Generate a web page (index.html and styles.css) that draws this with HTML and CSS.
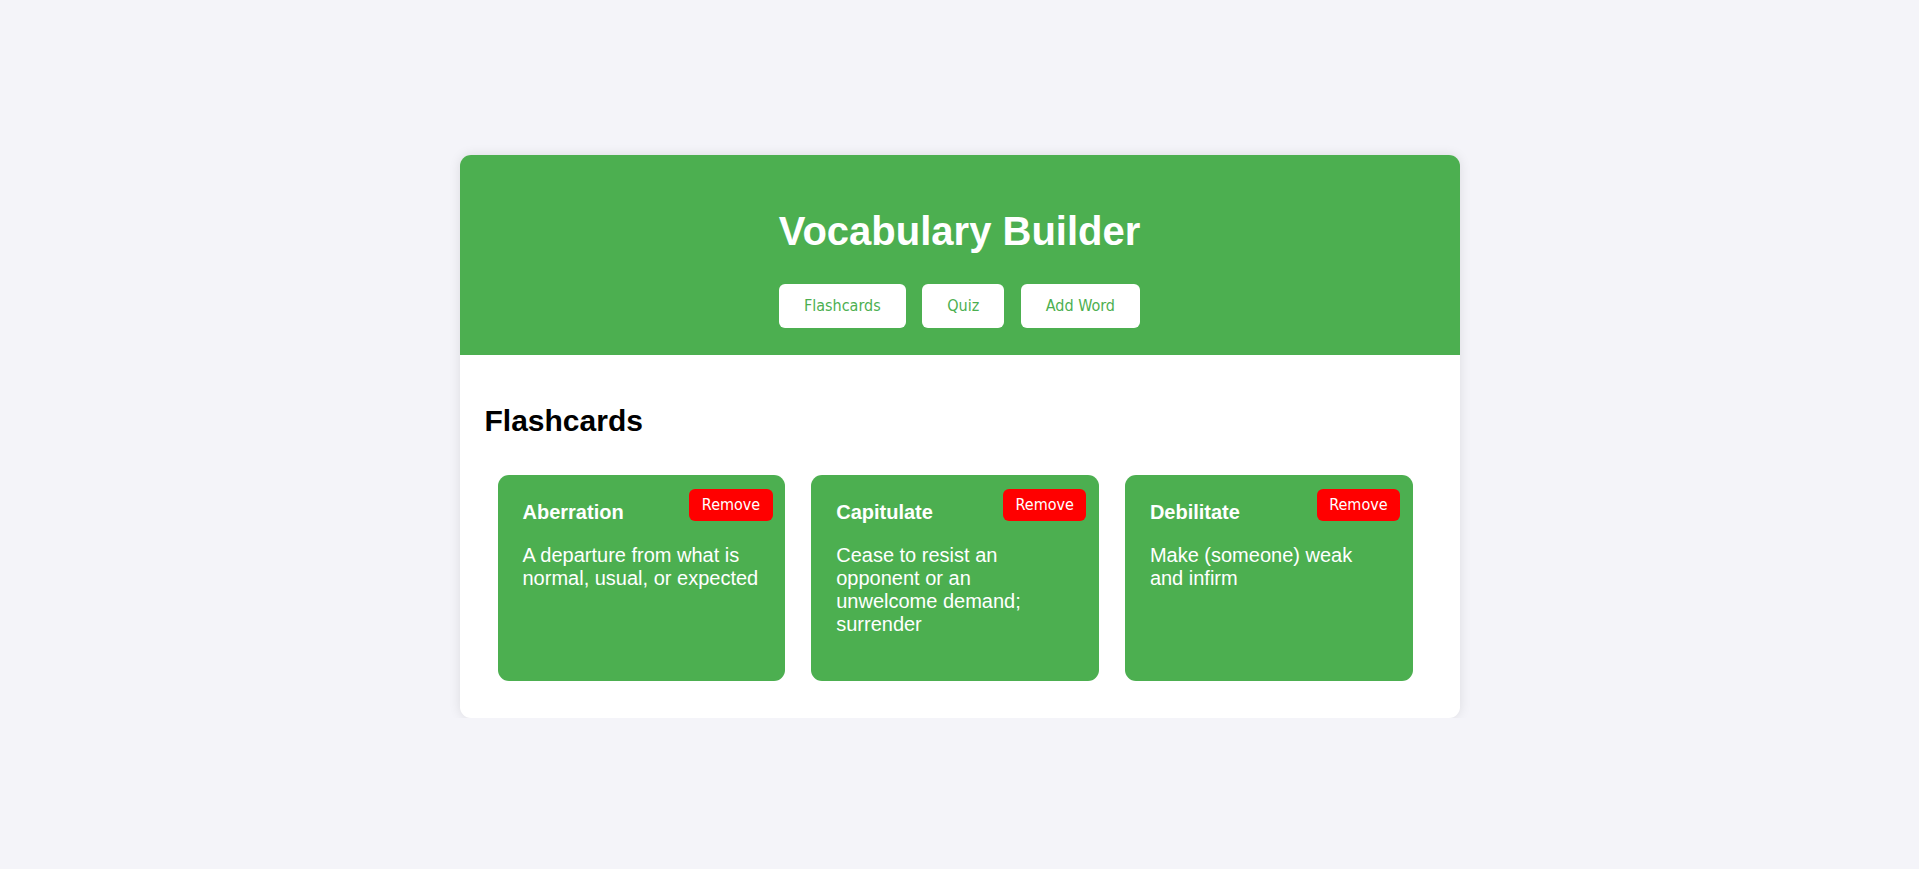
FILE: index.html
```html
<!DOCTYPE html>
<html lang="en">
<head>
<meta charset="utf-8">
<title>Vocabulary Builder</title>
<link rel="stylesheet" href="styles.css">
</head>
<body>
<div class="container">
  <header class="header">
    <h1 class="title">Vocabulary Builder</h1>
    <nav class="nav">
      <button class="nav-btn">Flashcards</button>
      <button class="nav-btn">Quiz</button>
      <button class="nav-btn">Add Word</button>
    </nav>
  </header>
  <section class="content">
    <h2 class="section-title">Flashcards</h2>
    <div class="cards">
      <div class="card">
        <button class="remove-btn">Remove</button>
        <div class="word">Aberration</div>
        <p class="definition">A departure from what is normal, usual, or expected</p>
      </div>
      <div class="card">
        <button class="remove-btn">Remove</button>
        <div class="word">Capitulate</div>
        <p class="definition">Cease to resist an opponent or an unwelcome demand; surrender</p>
      </div>
      <div class="card">
        <button class="remove-btn">Remove</button>
        <div class="word">Debilitate</div>
        <p class="definition">Make (someone) weak and infirm</p>
      </div>
    </div>
  </section>
</div>
</body>
</html>
```

FILE: styles.css
```css
* {
  box-sizing: border-box;
}

html, body {
  margin: 0;
  padding: 0;
}

body {
  background: #f4f4f9;
  font-family: "Liberation Sans", Arial, sans-serif;
  font-size: 20px;
  color: #000;
}

.container {
  width: 1000px;
  margin: 155px auto 0;
  background: #fff;
  border-radius: 11px;
  box-shadow: 0 0 12px rgba(0, 0, 0, 0.1);
  overflow: hidden;
}

.header {
  background: #4caf50;
  padding: 27px 25px;
  text-align: center;
}

.title {
  margin: 26.8px 0 29.8px;
  font-size: 40px;
  font-weight: bold;
  color: #fff;
  line-height: normal;
}

.nav {
  display: flex;
  justify-content: center;
  gap: 16.5px;
}

.nav-btn {
  background: #fff;
  color: #4caf50;
  border: none;
  border-radius: 6px;
  padding: 12.5px 25px;
  font-family: Tahoma, "DejaVu Sans Condensed", "DejaVu Sans", sans-serif;
  font-size: 16px;
  line-height: 19px;
  cursor: pointer;
}

.content {
  padding: 25px 25px 24px;
}

.section-title {
  margin: 24.9px 0 23.2px;
  font-size: 30px;
  font-weight: bold;
  line-height: normal;
}

.cards {
  display: flex;
  flex-wrap: wrap;
}

.card {
  position: relative;
  width: 287.7px;
  margin: 13px;
  padding: 25px;
  background: #4caf50;
  color: #fff;
  border-radius: 11px;
}

.word {
  margin: 1px 0 0;
  font-size: 20px;
  font-weight: bold;
  line-height: 23px;
}

.definition {
  margin: 20px 0;
  font-size: 20px;
  line-height: 23px;
}

.remove-btn {
  position: absolute;
  top: 14px;
  right: 12.5px;
  background: #ff0000;
  color: #fff;
  border: none;
  border-radius: 6px;
  padding: 6.5px 12.5px;
  font-family: Tahoma, "DejaVu Sans Condensed", "DejaVu Sans", sans-serif;
  font-size: 16px;
  line-height: 19px;
  cursor: pointer;
}
```
